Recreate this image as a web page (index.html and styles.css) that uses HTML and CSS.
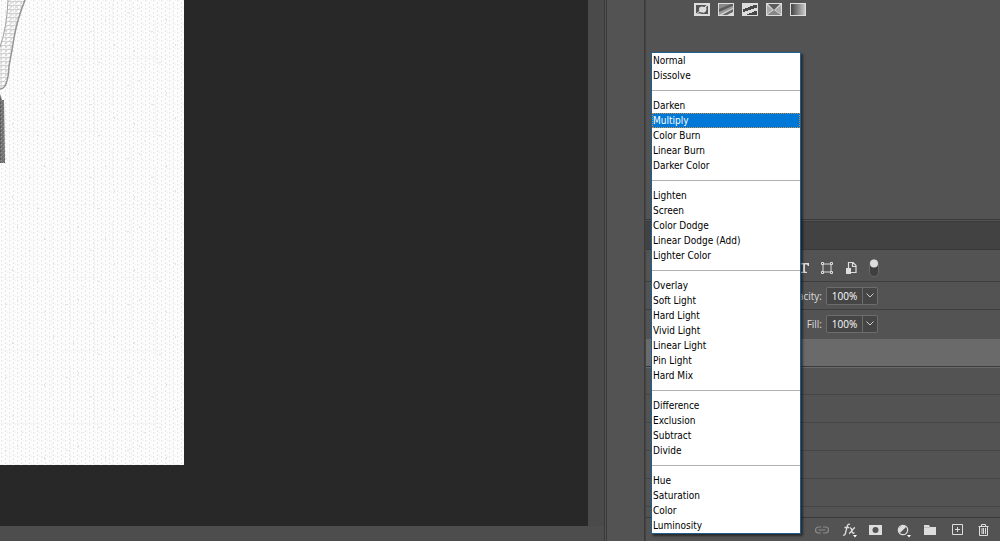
FILE: index.html
```html
<!DOCTYPE html>
<html lang="en">
<head>
<meta charset="utf-8">
<title>Layers</title>
<link rel="stylesheet" href="styles.css">
</head>
<body>
<div class="app">
  <main class="document">
    <div class="viewport">
      <svg class="artboard" viewBox="0 0 184 465" role="img" aria-label="Pencil sketch on woven paper">
        <defs>
          <pattern id="weave" width="8" height="8" patternUnits="userSpaceOnUse">
            <path d="M1 0h1v2h-1zM5 2h1v2h-1zM1 4h1v2h-1zM5 6h1v2h-1z" fill="#e8e8e8"/>
            <path d="M2 0h1v1h-1zM4 3h1v1h-1zM7 0h1v1h-1zM3 5h1v1h-1zM6 7h1v1h-1z" fill="#f3f3f3"/>
          </pattern>
          <pattern id="patches" width="61" height="73" patternUnits="userSpaceOnUse">
            <path d="M5 12h2v1h-2zM17 7h1v2h-1zM29 31h2v1h-2zM44 19h1v2h-1zM12 50h1v2h-1zM37 62h2v1h-2zM53 44h1v2h-1zM22 67h1v1h-1z" fill="#e0e0e0"/>
            <path d="M9 0h1v38h-1zM33 20h1v44h-1zM51 2h1v31h-1zM0 58h40v1h-40z" fill="#ededed" opacity=".5"/>
          </pattern>
          <pattern id="knit" width="5" height="4" patternUnits="userSpaceOnUse">
            <path d="M0 1l2 1l3-1M1 2v2" fill="none" stroke="#b8b8b8" stroke-width=".8"/>
          </pattern>
          <pattern id="hatch" width="4" height="4" patternUnits="userSpaceOnUse">
            <path d="M0 0h4v4h-4z" fill="#747474"/>
            <path d="M1 0h1v1h-1zM3 2h1v1h-1z" fill="#989898"/>
            <path d="M0 2h1v2h-1z" fill="#5c5c5c"/>
          </pattern>
        </defs>
        <path d="M0 0h184v465h-184z" fill="#fdfdfd"/>
        <path d="M0 0h184v465h-184z" fill="url(#weave)"/>
        <path d="M0 0h184v465h-184z" fill="url(#patches)"/>
        <path d="M8 0h17L14 38L8 76Q6 90 0 89V47Q8 27 8 0z" fill="url(#knit)"/>
        <path d="M8 0Q7 27 0 47" fill="none" stroke="#a0a0a0"/>
        <path d="M25 0Q17 20 14 38T9 66Q8 89 0 89" fill="none" stroke="#949494" stroke-width="1.5"/>
        <path d="M0 94l2 6H4l1 63H0z" fill="url(#hatch)"/>
      </svg>
    </div>
    <div class="scroll-v"></div>
    <div class="scroll-h"></div>
  </main>
  <div class="dock"></div>
  <aside class="panels">
    <section class="adjustments" aria-label="Adjustments">
      <button class="icon" aria-label="Invert"><svg width="16" height="13" viewBox="0 0 16 13"><path d="M0 0h16v13H0z" fill="#ddd"/><path d="M2 2h11L9 5a3 3 0 0 1-3 5L2 11z" fill="#555"/><path d="M14 2v9H4l4-1a4 4 0 0 0 4-6z" fill="#555"/><circle cx="8" cy="6.5" r="3" fill="#ddd"/><path d="M2 11L14 2" stroke="#ddd"/></svg></button>
      <button class="icon" aria-label="Posterize"><svg width="16" height="13" viewBox="0 0 16 13"><path d="M0 0h16v13H0z" fill="#ddd"/><path d="M1 1h13L1 7z" fill="#888"/><path d="M1 6L13 1h2v2L1 10z" fill="#5c5c5c"/><path d="M1 9L15 3v2L1 12z" fill="#999"/><path d="M4 12l11-6v3l-6 3z" fill="#666"/></svg></button>
      <button class="icon" aria-label="Threshold"><svg width="16" height="13" viewBox="0 0 16 13"><path d="M0 0h16v13H0z" fill="#ddd"/><path d="M1 6h2V5h3V4h2V3h3V2h4v3h-3v1H9v1H6v1H3v1H1zM5 11h2v-1h3V9h2V8h3v4H5z" fill="#484848"/></svg></button>
      <button class="icon" aria-label="Selective color"><svg width="16" height="13" viewBox="0 0 16 13"><path d="M0 0h16v13H0z" fill="#ddd"/><path d="M2 1h12L8 7z" fill="#5c5c5c"/><path d="M1 2l6 5l-6 4z" fill="#aaa"/><path d="M15 2v9L9 7z" fill="#aaa"/><path d="M1 12l7-5l7 5z" fill="#858585"/></svg></button>
      <button class="icon" aria-label="Gradient map"><svg width="16" height="13" viewBox="0 0 16 13"><defs><linearGradient id="ramp"><stop stop-color="#444"/><stop offset="1" stop-color="#c8c8c8"/></linearGradient></defs><path d="M0 0h16v13H0z" fill="#ddd"/><path d="M1 1h14v11H1z" fill="url(#ramp)"/></svg></button>
    </section>
    <div class="tabs"></div>
    <div class="row filter">
      <button class="icon" aria-label="Type layers"><svg width="10" height="10" viewBox="0 0 10 10"><path d="M0 0h10v3H9L8 1.500H6V8.500l2 .5v1H2V9l2-.5V1.500H2L1 3H0z" fill="#ddd"/></svg></button>
      <button class="icon" aria-label="Shape layers"><svg width="12" height="12" viewBox="0 0 12 12"><path d="M2 2h8v8H2z" fill="none" stroke="#ddd"/><path d="M.5.5h2v2h-2zM9.500.5h2v2h-2zM.5 9.500h2v2h-2zM9.500 9.500h2v2h-2z" fill="#535353" stroke="#ddd"/></svg></button>
      <button class="icon" aria-label="Smart objects"><svg width="12" height="12" viewBox="0 0 12 12"><path d="M3.500 6V.5H8l3 3v7H6M7.500 1v3.500H11" fill="none" stroke="#ddd" stroke-width="1.200"/><path d="M1 6h5v6H1z" fill="#ddd"/></svg></button>
      <button class="icon" aria-label="Layer filtering"><svg width="10" height="18" viewBox="0 0 10 18"><rect x=".5" y=".5" width="9" height="17" rx="4.500" fill="#3f3f3f" stroke="#666"/><circle cx="5" cy="4.500" r="4" fill="#ddd"/></svg></button>
    </div>
    <div class="row">
      <label class="caption" for="opacity">Opacity:</label>
      <span class="field"><input id="opacity" value="100%"><button aria-label="Opacity slider"><svg width="8" height="5" viewBox="0 0 8 5"><path d="M.5.5L4 4L7.500.5" fill="none" stroke="#ccc"/></svg></button></span>
    </div>
    <div class="row">
      <label class="caption" for="fill">Fill:</label>
      <span class="field"><input id="fill" value="100%"><button aria-label="Fill slider"><svg width="8" height="5" viewBox="0 0 8 5"><path d="M.5.5L4 4L7.500.5" fill="none" stroke="#ccc"/></svg></button></span>
    </div>
    <div class="layers">
      <div class="layer current"></div>
      <div class="layer"></div>
      <div class="layer"></div>
      <div class="layer"></div>
      <div class="layer"></div>
      <div class="layer"></div>
    </div>
    <footer class="actions">
      <button class="icon" aria-label="Link layers"><svg width="16" height="12" viewBox="0 0 16 12"><path d="M7 3H4.500a3 3 0 0 0 0 6H7M9 3h2.500a3 3 0 0 1 0 6H9M4.500 6h7" fill="none" stroke="#8c8c8c" stroke-width="1.200"/></svg></button>
      <button class="icon" aria-label="Layer style"><svg width="16" height="16" viewBox="0 0 16 16"><path d="M9 2.500C7.500 1.500 6.500 2.500 6 5L4.500 11C4 13 3 13.500 2 13M3.500 5.500H8M8.500 6C10.500 5 10.500 8 11 9.500S12.500 12 13.500 10.500M14 5.500C12 6 10 11 8 11.500" fill="none" stroke="#ddd" stroke-width="1.300"/><path d="M12 13h4l-2 2.500z" fill="#fff"/></svg></button>
      <button class="icon" aria-label="Add mask"><svg width="14" height="12" viewBox="0 0 14 12"><path d="M0 1h13v10H0z" fill="#ddd"/><circle cx="6.500" cy="6" r="3" fill="#535353"/></svg></button>
      <button class="icon" aria-label="New adjustment layer"><svg width="16" height="16" viewBox="0 0 16 16"><circle cx="8" cy="8" r="4.700" fill="#535353" stroke="#ddd" stroke-width="1.200"/><path d="M4.700 11.300A4.700 4.700 0 0 1 11.300 4.700z" fill="#ddd"/><path d="M12 13h4l-2 2.500z" fill="#fff"/></svg></button>
      <button class="icon" aria-label="New group"><svg width="12" height="10" viewBox="0 0 12 10"><path d="M0 0h5l1 2h6v8H0z" fill="#ddd"/><path d="M0 2.500h6" stroke="#aaa" stroke-width=".6"/></svg></button>
      <button class="icon" aria-label="New layer"><svg width="12" height="12" viewBox="0 0 12 12"><path d="M1.500.5h10v10H1.500zM6.500 3v5M4 5.500h5" fill="none" stroke="#ddd"/></svg></button>
      <button class="icon" aria-label="Delete layer"><svg width="12" height="12" viewBox="0 0 12 12"><path d="M.5 2.500h10M3.500 2V.5h4V2M1.500 3v8.500h8V3M4 4v6M5.500 4v6M7.500 4v6" fill="none" stroke="#ddd"/></svg></button>
    </footer>
    <ul class="menu" role="listbox" aria-label="Blend mode">
      <li><button role="option">Normal</button></li>
      <li><button role="option">Dissolve</button></li>
      <li class="divider" role="separator"></li>
      <li><button role="option">Darken</button></li>
      <li><button role="option" class="selected" aria-selected="true">Multiply</button></li>
      <li><button role="option">Color Burn</button></li>
      <li><button role="option">Linear Burn</button></li>
      <li><button role="option">Darker Color</button></li>
      <li class="divider" role="separator"></li>
      <li><button role="option">Lighten</button></li>
      <li><button role="option">Screen</button></li>
      <li><button role="option">Color Dodge</button></li>
      <li><button role="option">Linear Dodge (Add)</button></li>
      <li><button role="option">Lighter Color</button></li>
      <li class="divider" role="separator"></li>
      <li><button role="option">Overlay</button></li>
      <li><button role="option">Soft Light</button></li>
      <li><button role="option">Hard Light</button></li>
      <li><button role="option">Vivid Light</button></li>
      <li><button role="option">Linear Light</button></li>
      <li><button role="option">Pin Light</button></li>
      <li><button role="option">Hard Mix</button></li>
      <li class="divider" role="separator"></li>
      <li><button role="option">Difference</button></li>
      <li><button role="option">Exclusion</button></li>
      <li><button role="option">Subtract</button></li>
      <li><button role="option">Divide</button></li>
      <li class="divider" role="separator"></li>
      <li><button role="option">Hue</button></li>
      <li><button role="option">Saturation</button></li>
      <li><button role="option">Color</button></li>
      <li><button role="option">Luminosity</button></li>
    </ul>
  </aside>
</div>
</body>
</html>
```

FILE: styles.css
```css
* {
  box-sizing: border-box;
}

body {
  margin: 0;
  background: #535353;
  color: #dddddd;
  font-family: "Open Sans", "Noto Sans", sans-serif;
  font-size: 10px;
}

button,
input {
  margin: 0;
  padding: 0;
  border: 0;
  background: none;
  color: inherit;
  font: inherit;
}

svg {
  display: block;
}

.app {
  display: grid;
  grid-template-columns: 1fr 41px 355px;
  min-height: 100vh;
}

.document {
  display: grid;
  grid-template-columns: 1fr 16px;
  grid-template-rows: 1fr 15px;
}

.viewport {
  background: #282828;
  overflow: hidden;
}

.artboard {
  width: 184px;
  height: 465px;
}

.scroll-v {
  background: #4a4a4a;
}

.scroll-h {
  grid-column: 1 / -1;
  background: #4d4d4d;
}

.dock {
  border-left: 3px double #3a3a3a;
  border-right: 1px solid #3a3a3a;
}

.panels {
  position: relative;
  display: flex;
  flex-direction: column;
  border-left: 1px solid #424242;
}

.icon {
  display: flex;
  align-items: center;
  justify-content: center;
}

.adjustments {
  display: flex;
  align-items: flex-start;
  gap: 8px;
  height: 222px;
  padding: 3px 48px;
  border-bottom: 3px double #3b3b3b;
}

.tabs {
  height: 28px;
  background: #424242;
  border-bottom: 1px solid #393939;
}

.row {
  display: flex;
  align-items: center;
  gap: 4px;
  height: 28px;
}

.row + .row {
  border-top: 1px solid #3d3d3d;
}

.filter {
  gap: 12px;
  height: 31px;
  padding: 5px 0 0 153px;
}

.caption {
  width: 176px;
  text-align: right;
}

.field {
  display: flex;
  width: 52px;
  height: 18px;
  border: 1px solid #6c6c6c;
  border-radius: 2px;
  background: #454545;
}

.field input {
  flex: 1;
  min-width: 0;
  color: #ffffff;
  text-align: center;
}

.field button {
  display: flex;
  align-items: center;
  justify-content: center;
  width: 15px;
  border-left: 1px solid #6c6c6c;
}

.layers {
  flex: 1;
  padding-top: 2px;
}

.layer {
  height: 28px;
  border-bottom: 1px solid #454545;
}

.layer.current {
  background: #6a6a6a;
  border-bottom: 1px solid #3b3b3b;
  box-shadow: 0 1px #696969;
}

.actions {
  display: flex;
  justify-content: flex-end;
  align-items: center;
  gap: 5px;
  height: 24px;
  padding-right: 5px;
  border-top: 1px solid #3b3b3b;
}

.actions .icon {
  width: 22px;
}

.menu {
  position: absolute;
  top: 52px;
  left: 5px;
  width: 150px;
  margin: 0;
  padding: 0;
  border: 1px solid #1c5f92;
  background: #ffffff;
  box-shadow: 2px 2px 2px rgba(0, 0, 0, 0.5);
  color: #000000;
  font-family: "DejaVu Sans Condensed", "DejaVu Sans", sans-serif;
  list-style: none;
}

.menu li {
  height: 15px;
}

.menu button {
  display: block;
  width: 100%;
  height: 15px;
  padding-left: 1px;
  line-height: 15px;
  text-align: left;
}

.menu .selected {
  background: #0078d7;
  color: #ffffff;
  outline: 1px dotted #c98f4e;
  outline-offset: -1px;
}

.menu .divider {
  padding-top: 7px;
}

.divider::before {
  display: block;
  border-top: 1px solid #b0b0b0;
  content: "";
}
```
